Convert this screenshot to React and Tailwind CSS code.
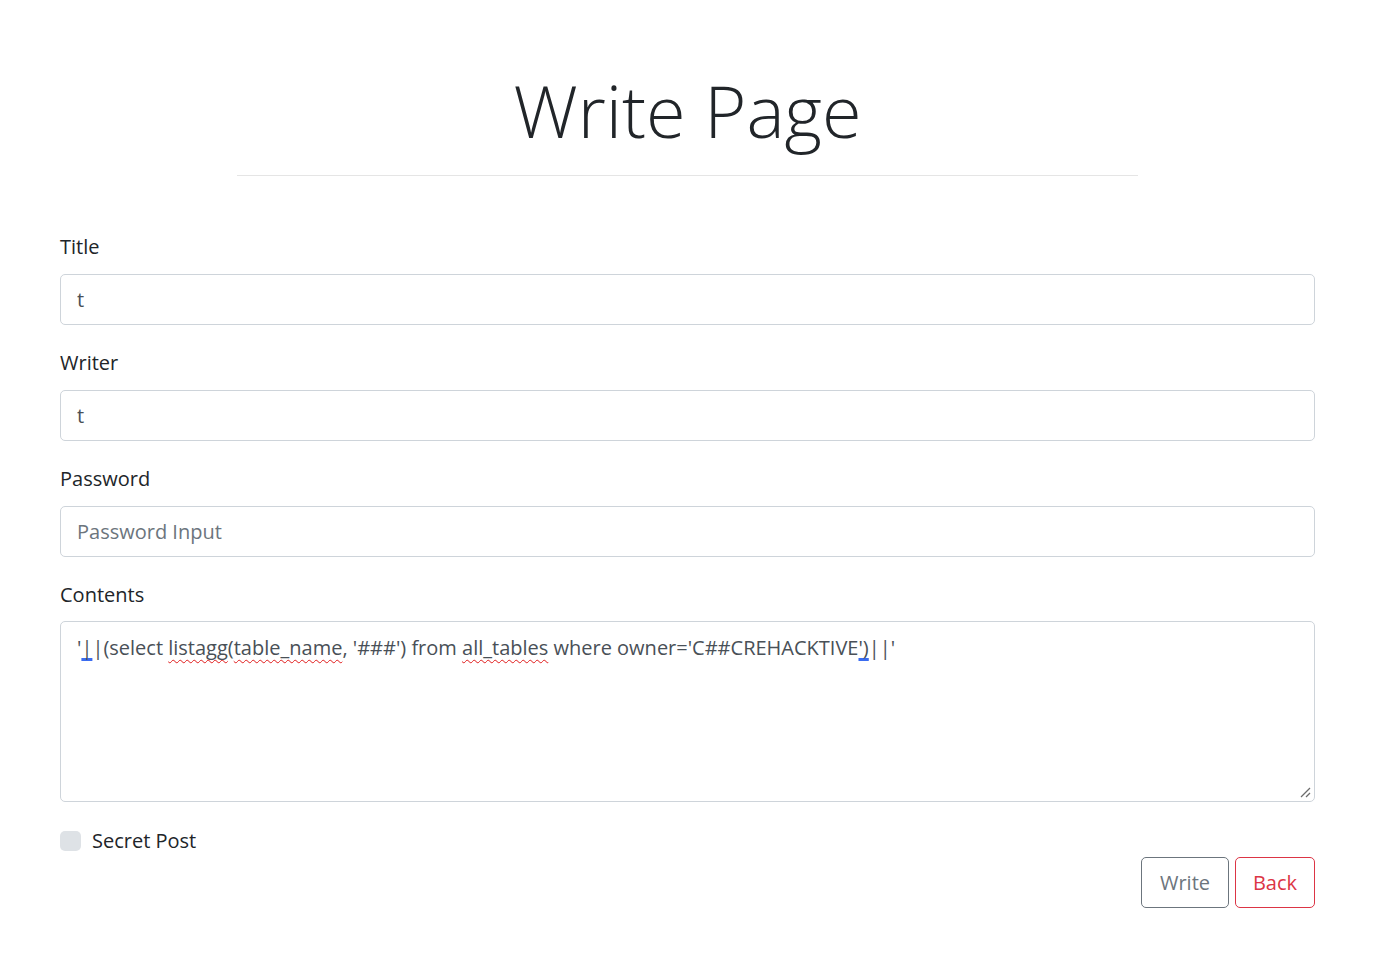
import React from 'react';

const font = { fontFamily: '"Open Sans", "Noto Sans", sans-serif' };

const Field = ({ label, value, placeholder }) => (
  <div className="mb-[23px]">
    <label className="block text-[20px] leading-[30px] text-[#212529] mb-[12px]">{label}</label>
    <input
      type="text"
      defaultValue={value}
      placeholder={placeholder}
      className="block w-full h-[51px] px-[16px] text-[20px] text-[#495057] placeholder:text-[#6c757d] bg-white border border-[#ced4da] rounded-[5px] outline-none"
    />
  </div>
);

const spell = "underline decoration-wavy decoration-[#e01b1b] decoration-1 underline-offset-[4px] [text-decoration-skip-ink:none]";
const grammar = "underline decoration-[#3b6cf0] decoration-[3px] underline-offset-[3px] [text-decoration-skip-ink:none]";

export default function App() {
  return (
    <div className="min-h-screen bg-white pt-[64px] w-[1375px]" style={font}>
      {/* Header */}
      <h1 className="text-center font-light text-[72px] leading-[92px] text-[#212529]">Write Page</h1>
      <div className="mx-auto w-[901px] border-t border-[#e5e5e5] mt-[19px]"></div>

      {/* Form */}
      <div className="px-[60px] mt-[56px]">
        <Field label="Title" value="t" />
        <Field label="Writer" value="t" />
        <Field label="Password" placeholder="Password Input" />

        <div className="mb-[24px]">
          <label className="block text-[20px] leading-[30px] text-[#212529] mb-[11px]">Contents</label>
          <div className="relative w-full h-[181px] px-[16px] pt-[11px] text-[20px] leading-[30px] text-[#495057] bg-white border border-[#ced4da] rounded-[5px]">
            <span>'</span>
            <span className={grammar}>|</span>
            <span>|(select </span>
            <span className={spell}>listagg</span>
            <span>(</span>
            <span className={spell}>table_name</span>
            <span>, '###') from </span>
            <span className={spell}>all_tables</span>
            <span> where owner='C##CREHACKTIVE</span>
            <span className={grammar}>')</span>
            <span>||'</span>
            <svg className="absolute right-[3px] bottom-[3px]" width="12" height="12" viewBox="0 0 12 12">
              <path d="M2 11 L11 2" stroke="#6c6c6c" strokeWidth="1.3" />
              <path d="M7 11 L11 7" stroke="#6c6c6c" strokeWidth="1.3" />
            </svg>
          </div>
        </div>

        <div className="flex items-center h-[30px]">
          <span className="w-[21px] h-[20px] rounded-[5px] bg-[#dee2e6]"></span>
          <span className="ml-[11px] text-[20px] leading-[30px] text-[#212529]">Secret Post</span>
        </div>

        <div className="flex justify-end gap-[6px] mt-[1px]">
          <button className="h-[51px] w-[88px] text-[20px] text-[#6c757d] border border-[#6c757d] rounded-[5px] bg-white">Write</button>
          <button className="h-[51px] w-[80px] text-[20px] text-[#dc3545] border border-[#dc3545] rounded-[5px] bg-white">Back</button>
        </div>
      </div>
    </div>
  );
}
